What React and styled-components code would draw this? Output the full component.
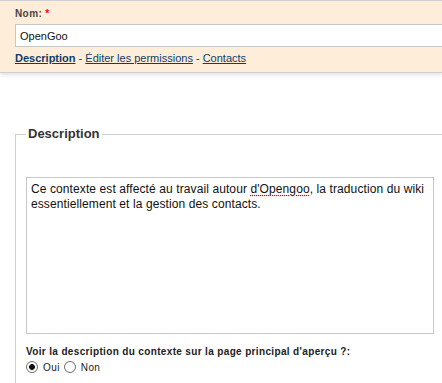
import React from 'react'
import styled, { createGlobalStyle } from 'styled-components'

const GlobalStyle = createGlobalStyle`
  html, body {
    margin: 0;
    padding: 0;
    background: #fff;
    overflow: hidden;
  }
  body {
    font-family: "Liberation Sans", Arial, sans-serif;
    color: #333;
  }
`

function App() {
  return (
    <Page>
      <GlobalStyle />
      <Header>
        <Label>
          Nom: <Required>*</Required>
        </Label>
        <NameInput defaultValue="OpenGoo" />
        <Tabs>
          <TabLink href="#" $active>Description</TabLink>
          <Sep> - </Sep>
          <TabLink href="#">Éditer les permissions</TabLink>
          <Sep> - </Sep>
          <TabLink href="#">Contacts</TabLink>
        </Tabs>
      </Header>

      <Fieldset>
        <Legend>Description</Legend>
        <TextBox>
          Ce contexte est affecté au travail autour <Misspelled>d'Opengoo</Misspelled>, la traduction du wiki
          essentiellement et la gestion des contacts.
        </TextBox>
        <Question>Voir la description du contexte sur la page principal d'aperçu ?:</Question>
        <Radios>
          <RadioLabel>
            <Radio type="radio" name="show" defaultChecked />
            Oui
          </RadioLabel>
          <RadioLabel>
            <Radio type="radio" name="show" />
            Non
          </RadioLabel>
        </Radios>
      </Fieldset>
    </Page>
  )
}

export default App

const Page = styled.div`
  width: 442px;
  height: 383px;
  overflow: hidden;
`

const Header = styled.div`
  background: #feeed9;
  border-top: 1px solid #cfcfcf;
  border-bottom: 1px solid #cfcfcf;
  box-shadow: 0 2px 4px rgba(0, 0, 0, 0.12);
  padding: 7px 0 7px 15px;
  height: 57px;
`

const Label = styled.div`
  font-size: 10px;
  font-weight: bold;
  letter-spacing: 0.4px;
  color: #444;
  line-height: 12px;
`

const Required = styled.span`
  color: #e00;
`

const NameInput = styled.input`
  display: block;
  box-sizing: border-box;
  margin-top: 4px;
  width: 440px;
  height: 23px;
  border: 1px solid #c8c8c8;
  border-right: none;
  padding: 0 4px;
  font-family: "Liberation Sans", Arial, sans-serif;
  font-size: 11px;
  color: #111;
  background: #fff;
  outline: none;
`

const Tabs = styled.div`
  margin-top: 4px;
  font-size: 11px;
  line-height: 14px;
`

const TabLink = styled.a`
  color: #0f3c68;
  font-weight: ${p => (p.$active ? 'bold' : 'normal')};
  text-decoration: underline;
`

const Sep = styled.span`
  color: #333;
`

const Fieldset = styled.fieldset`
  margin: 53px 0 0 15px;
  width: 440px;
  padding: 0 10px 20px 10px;
  border: 1px solid #cfcfcf;
  border-right: none;
`

const Legend = styled.legend`
  padding: 0 2px;
  font-size: 13px;
  font-weight: bold;
  color: #333;
  line-height: 16px;
`

const TextBox = styled.div`
  box-sizing: border-box;
  margin-top: 35px;
  width: 408px;
  height: 157px;
  border: 1px solid #c8c8c8;
  padding: 4px 4px;
  font-size: 12px;
  letter-spacing: 0.1px;
  line-height: 15px;
  color: #111;
`

const Misspelled = styled.span`
  text-decoration: underline dotted #e00;
  text-underline-offset: 2px;
`

const Question = styled.div`
  margin-top: 12px;
  font-size: 10px;
  font-weight: bold;
  letter-spacing: 0.35px;
  color: #222;
  line-height: 12px;
`

const Radios = styled.div`
  display: flex;
  align-items: center;
  gap: 4px;
  margin-top: 3px;
`

const RadioLabel = styled.label`
  display: flex;
  align-items: center;
  font-size: 10px;
  letter-spacing: 0.4px;
  color: #222;
`

const Radio = styled.input`
  appearance: none;
  box-sizing: border-box;
  margin: 0 5px 0 0;
  width: 12px;
  height: 12px;
  border: 1px solid #707070;
  border-radius: 50%;
  background: #fff;

  &:checked {
    background: radial-gradient(circle, #111 0 2.6px, #fff 3.2px);
  }
`
